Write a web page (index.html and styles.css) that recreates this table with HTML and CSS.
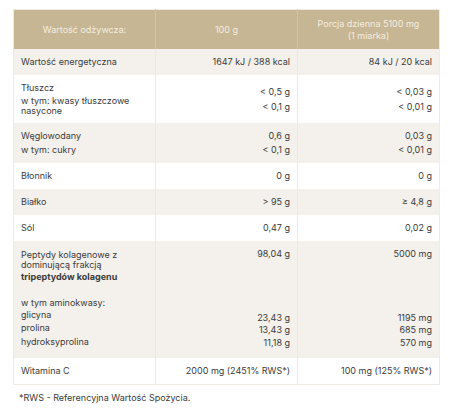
FILE: index.html
```html
<!DOCTYPE html>
<html lang="pl">
<head>
    <meta charset="UTF-8">
    <meta name="viewport" content="width=device-width, initial-scale=1.0">
    <title>Wartość odżywcza</title>
    <link rel="stylesheet" href="styles.css">
</head>
<body>
    <div class="nutrition">
        <table class="nutrition-table">
            <thead>
                <tr>
                    <th>Wartość odżywcza:</th>
                    <th>100 g</th>
                    <th>Porcja dzienna 5100 mg<br>(1 miarka)</th>
                </tr>
            </thead>
            <tbody>
                <tr class="shaded">
                    <td>Wartość energetyczna</td>
                    <td class="value">1647 kJ / 388 kcal</td>
                    <td class="value">84 kJ / 20 kcal</td>
                </tr>
                <tr class="fat">
                    <td>
                        <div class="line">Tłuszcz</div>
                        <div class="wrap">w tym: kwasy tłuszczowe<br>nasycone</div>
                    </td>
                    <td class="value">
                        <div class="line">&lt; 0,5 g</div>
                        <div class="line loose">&lt; 0,1 g</div>
                    </td>
                    <td class="value">
                        <div class="line">&lt; 0,03 g</div>
                        <div class="line loose">&lt; 0,01 g</div>
                    </td>
                </tr>
                <tr class="shaded">
                    <td>
                        <div class="line">Węglowodany</div>
                        <div class="line">w tym: cukry</div>
                    </td>
                    <td class="value">
                        <div class="line">0,6 g</div>
                        <div class="line">&lt; 0,1 g</div>
                    </td>
                    <td class="value">
                        <div class="line">0,03 g</div>
                        <div class="line">&lt; 0,01 g</div>
                    </td>
                </tr>
                <tr>
                    <td>Błonnik</td>
                    <td class="value">0 g</td>
                    <td class="value">0 g</td>
                </tr>
                <tr class="shaded">
                    <td>Białko</td>
                    <td class="value">&gt; 95 g</td>
                    <td class="value">≥ 4,8 g</td>
                </tr>
                <tr>
                    <td>Sól</td>
                    <td class="value">0,47 g</td>
                    <td class="value">0,02 g</td>
                </tr>
                <tr class="shaded top">
                    <td>
                        <div class="wrap first">Peptydy kolagenowe z<br>dominującą frakcją</div>
                        <div class="line bold">tripeptydów kolagenu</div>
                        <div class="line section">w tym aminokwasy:</div>
                        <div class="line tight">glicyna</div>
                        <div class="line mid">prolina</div>
                        <div class="line">hydroksyprolina</div>
                    </td>
                    <td class="value">
                        <div class="line">98,04 g</div>
                        <div class="line amino">23,43 g</div>
                        <div class="line tight">13,43 g</div>
                        <div class="line mid">11,18 g</div>
                    </td>
                    <td class="value">
                        <div class="line">5000 mg</div>
                        <div class="line amino">1195 mg</div>
                        <div class="line tight">685 mg</div>
                        <div class="line mid">570 mg</div>
                    </td>
                </tr>
                <tr>
                    <td>Witamina C</td>
                    <td class="value">2000 mg (2451% RWS*)</td>
                    <td class="value">100 mg (125% RWS*)</td>
                </tr>
            </tbody>
        </table>
        <p class="footnote">*RWS - Referencyjna Wartość Spożycia.</p>
    </div>
</body>
</html>
```

FILE: styles.css
```css
body {
    margin: 0;
    padding: 9px 9px 0 13px;
    background-color: #fff;
    font-family: Inter, "Noto Sans", sans-serif;
    font-size: 9px;
    color: #3b3b3b;
}
.nutrition-table {
    width: 427px;
    border-collapse: collapse;
    table-layout: fixed;
    border: 1px solid #efebe4;
}
.nutrition-table th {
    background-color: #c7b693;
    color: #f3ede0;
    font-weight: 400;
    line-height: 12px;
    height: 39px;
    padding: 0 7px;
    text-align: center;
    border-left: 1px solid #d2c3a4;
}
.nutrition-table th:first-child {
    border-left: none;
}
.nutrition-table td {
    padding: 8px 7px;
    line-height: 10px;
    vertical-align: middle;
    border-left: 1px solid #ede9e2;
}
.nutrition-table td:first-child {
    border-left: none;
}
.nutrition-table td.value {
    text-align: right;
}
.shaded td {
    background-color: #f4f1ec;
}
.fat td {
    padding-bottom: 7px;
}
.top td {
    vertical-align: top;
    padding-bottom: 10px;
}
.line + .line {
    margin-top: 4px;
}
.line.loose {
    margin-top: 5px;
}
.wrap {
    line-height: 10px;
    margin-top: 3px;
}
.wrap.first {
    margin-top: 1px;
}
.line.bold {
    font-weight: 700;
    margin-top: 2px;
}
.line.section {
    margin-top: 16px;
}
.line.tight {
    margin-top: 2px;
}
.line.mid {
    margin-top: 3px;
}
.line.amino {
    margin-top: 54px;
}
.footnote {
    margin: 8px 0 0 6px;
    line-height: 10px;
}
```
